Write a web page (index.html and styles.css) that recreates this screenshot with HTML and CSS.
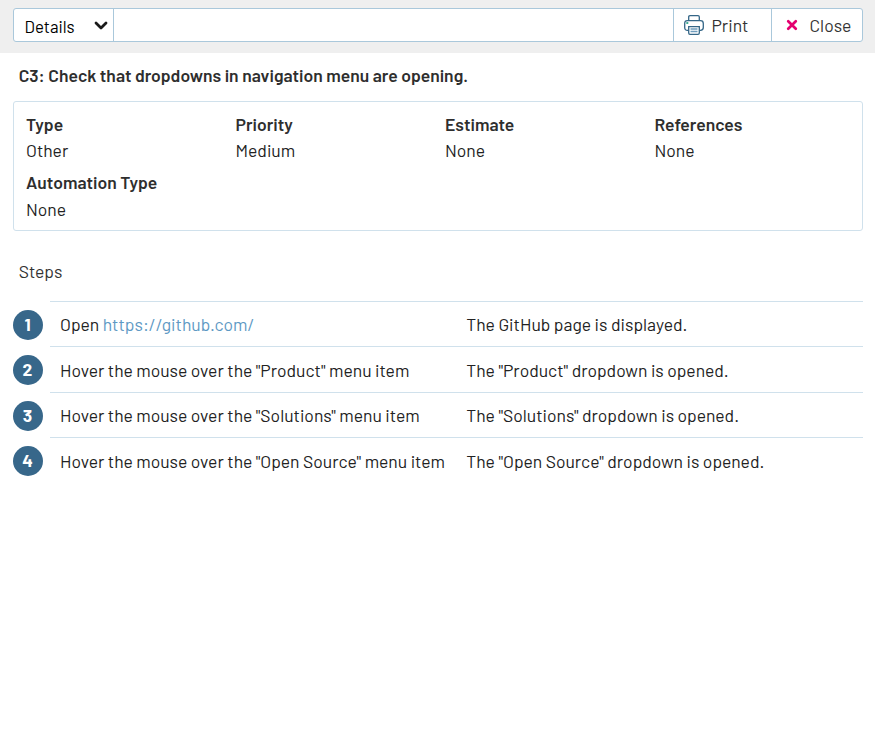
FILE: index.html
```html
<!DOCTYPE html>
<html lang="en">
<head>
<meta charset="utf-8">
<title>Test case details</title>
<link rel="stylesheet" href="styles.css">
</head>
<body>
<header class="topbar">
  <div class="toolbar">
    <div class="select"><span>Details</span>
      <svg class="chevron" width="14" height="9" viewBox="0 0 14 9"><path d="M2 2l5 5 5-5" fill="none" stroke="#1a1a1a" stroke-width="2.8" stroke-linecap="round" stroke-linejoin="round"/></svg>
    </div>
    <div class="spacer"></div>
    <div class="button print">
      <svg width="20" height="20" viewBox="0 0 20 20" fill="none" stroke="#346687" stroke-width="1.3"><path d="M4.7 6V2Q4.7.7 6 .7h8q1.3 0 1.3 1.3v4M4.7 15.3H3.5Q.7 15.3.7 12.5V8.5Q.7 5.7 3.5 5.7h13q2.8 0 2.8 2.8v4q0 2.8-2.8 2.8h-1.2"/><path d="M4.7 11.7h10.6V18q0 1.3-1.3 1.3H6Q4.7 19.3 4.7 18z" fill="#fff"/><path d="M6.5 14h7M6.5 16.5h7" stroke="#6f9dbd"/><path d="M2.3 8h2" stroke="#1fa080" stroke-width="1.7"/></svg>
      <span>Print</span>
    </div>
    <div class="button close">
      <svg width="12" height="12" viewBox="0 0 12 12"><path d="M2.2 2.2l7.6 7.6M9.8 2.2L2.2 9.8" stroke="#e40070" stroke-width="2.7" stroke-linecap="round"/></svg>
      <span>Close</span>
    </div>
  </div>
</header>
<main>
  <h1>C3: Check that dropdowns in navigation menu are opening.</h1>
  <dl class="info">
    <div><dt>Type</dt><dd>Other</dd></div>
    <div><dt>Priority</dt><dd>Medium</dd></div>
    <div><dt>Estimate</dt><dd>None</dd></div>
    <div><dt>References</dt><dd>None</dd></div>
    <div class="automation"><dt>Automation Type</dt><dd>None</dd></div>
  </dl>
  <h2>Steps</h2>
  <ol class="steps">
    <li><b class="num">1</b><div class="row"><p>Open <a>https://github.com/</a></p><p>The GitHub page is displayed.</p></div></li>
    <li><b class="num">2</b><div class="row"><p>Hover the mouse over the "Product" menu item</p><p>The "Product" dropdown is opened.</p></div></li>
    <li><b class="num">3</b><div class="row"><p>Hover the mouse over the "Solutions" menu item</p><p>The "Solutions" dropdown is opened.</p></div></li>
    <li><b class="num">4</b><div class="row"><p>Hover the mouse over the "Open Source" menu item</p><p>The "Open Source" dropdown is opened.</p></div></li>
  </ol>
</main>
</body>
</html>
```
FILE: styles.css
```css
* { box-sizing: border-box; }
body { margin: 0; background: #fff; color: #222; font: 17.5px/22px Barlow, Roboto, sans-serif; }
h1, h2, p, dl, dd, ol { margin: 0; padding: 0; }
.topbar { height: 53px; padding: 8px 12px 0 13px; background: #efefef; }
.toolbar { display: flex; height: 34px; background: #fff; border: 1px solid #aac8db; border-radius: 3px; }
.select { display: flex; align-items: center; justify-content: space-between; width: 100px; padding: 1px 5.5px 0 10.6px; border-right: 1px solid #aac8db; color: #000; font-size: 16.8px; }
.chevron { margin-bottom: 1px; }
.spacer { flex: 1; }
.button { display: flex; align-items: center; border-left: 1px solid #aac8db; color: #333; }
.print { width: 98px; padding-left: 10px; gap: 7.5px; }
.close { width: 91px; padding-left: 14px; gap: 11.5px; }
main { padding: 0 12px 0 13px; }
h1 { padding: 11px 5.7px 15px; font-size: 17.5px; line-height: 22px; font-weight: 600; color: #2e2e2e; }
.info { display: grid; grid-template-columns: repeat(4, 209.5px); height: 130px; padding: 11px 12px 0; border: 1px solid #d0e1ec; border-radius: 3px; align-content: start; row-gap: 10px; }
.info dt { font-weight: 600; color: #2e2e2e; }
.info dd { margin-top: 4px; }
.info .automation dd { margin-top: 5px; }
h2 { padding: 29px 5.7px 19px; font-size: 17.5px; line-height: 22px; font-weight: 400; color: #333; }
.steps { list-style: none; }
.steps li { display: flex; height: 45.4px; gap: 7px; align-items: stretch; }
.num { width: 30px; height: 30px; margin-top: 9px; padding-right: 1px; border-radius: 50%; background: #37678a; color: #fff; font-weight: 700; text-align: center; line-height: 28.6px; }
.row { flex: 1; display: grid; grid-template-columns: 406.3px 1fr; padding: 11.35px 0 0 10px; border-top: 1px solid #d0e1ec; }
.row a { color: #5e99c4; }
```
